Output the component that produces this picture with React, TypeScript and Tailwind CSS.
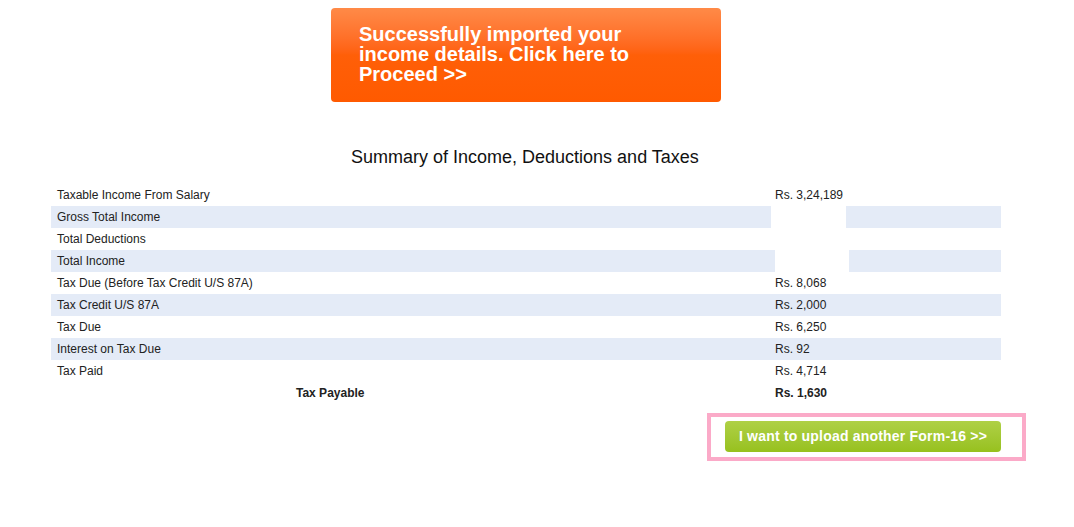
const rows: { label: string; value: string; hidden?: "a" | "b" }[] = [
  { label: "Taxable Income From Salary", value: "Rs. 3,24,189" },
  { label: "Gross Total Income", value: "", hidden: "a" },
  { label: "Total Deductions", value: "" },
  { label: "Total Income", value: "", hidden: "b" },
  { label: "Tax Due (Before Tax Credit U/S 87A)", value: "Rs. 8,068" },
  { label: "Tax Credit U/S 87A", value: "Rs. 2,000" },
  { label: "Tax Due", value: "Rs. 6,250" },
  { label: "Interest on Tax Due", value: "Rs. 92" },
  { label: "Tax Paid", value: "Rs. 4,714" },
]

export default function App() {
  return (
    <div className="min-h-[527px] w-[1074px] bg-white font-['Liberation_Sans',Arial,sans-serif] text-[#222]">
      {/* Proceed banner */}
      <div className="pt-2 pl-[331px]">
        <a
          href="#"
          className="block h-[94px] w-[390px] rounded-[4px] bg-gradient-to-b from-[#ff8a47] via-[#ff5f08] to-[#ff5a00] pl-[28px] pt-[16px] text-[20px] font-bold leading-[20px] text-white"
        >
          Successfully imported your
          <br />
          income details. Click here to
          <br />
          Proceed &gt;&gt;
        </a>
      </div>

      <h2 className="mt-[44px] pl-[351px] text-[18px] leading-[22px] text-[#111]">
        Summary of Income, Deductions and Taxes
      </h2>

      {/* Summary table */}
      <div className="mt-[16px] ml-[51px] w-[950px] text-[12px] leading-[22px]">
        {rows.map((r, i) => (
          <div key={r.label} className={`flex h-[22px] ${i % 2 === 1 ? "bg-[#e4ebf7]" : "bg-white"}`}>
            <div className="w-[720px] pl-[6px]">{r.label}</div>
            <div className="flex-1">
              {r.hidden === "a" && <div className="h-[22px] w-[75px] bg-white" />}
              {r.hidden === "b" && <div className="ml-[4px] h-[22px] w-[74px] bg-white" />}
              {!r.hidden && <span className="pl-[4px]">{r.value}</span>}
            </div>
          </div>
        ))}
        <div className="flex h-[22px] font-bold">
          <div className="w-[720px] pl-[245px]">Tax Payable</div>
          <div className="flex-1 pl-[4px]">Rs. 1,630</div>
        </div>
      </div>

      {/* Upload another */}
      <div className="mt-[9px] ml-[707px] h-[48px] w-[319px] border-4 border-[#fbaac8] pt-[4px] pl-[14px]">
        <a
          href="#"
          className="flex h-[31px] w-[276px] items-center justify-center rounded-[4px] bg-gradient-to-b from-[#afd045] to-[#97c11d] text-[14px] font-bold tracking-[0.2px] text-white"
        >
          I want to upload another Form-16 &gt;&gt;
        </a>
      </div>
    </div>
  )
}
